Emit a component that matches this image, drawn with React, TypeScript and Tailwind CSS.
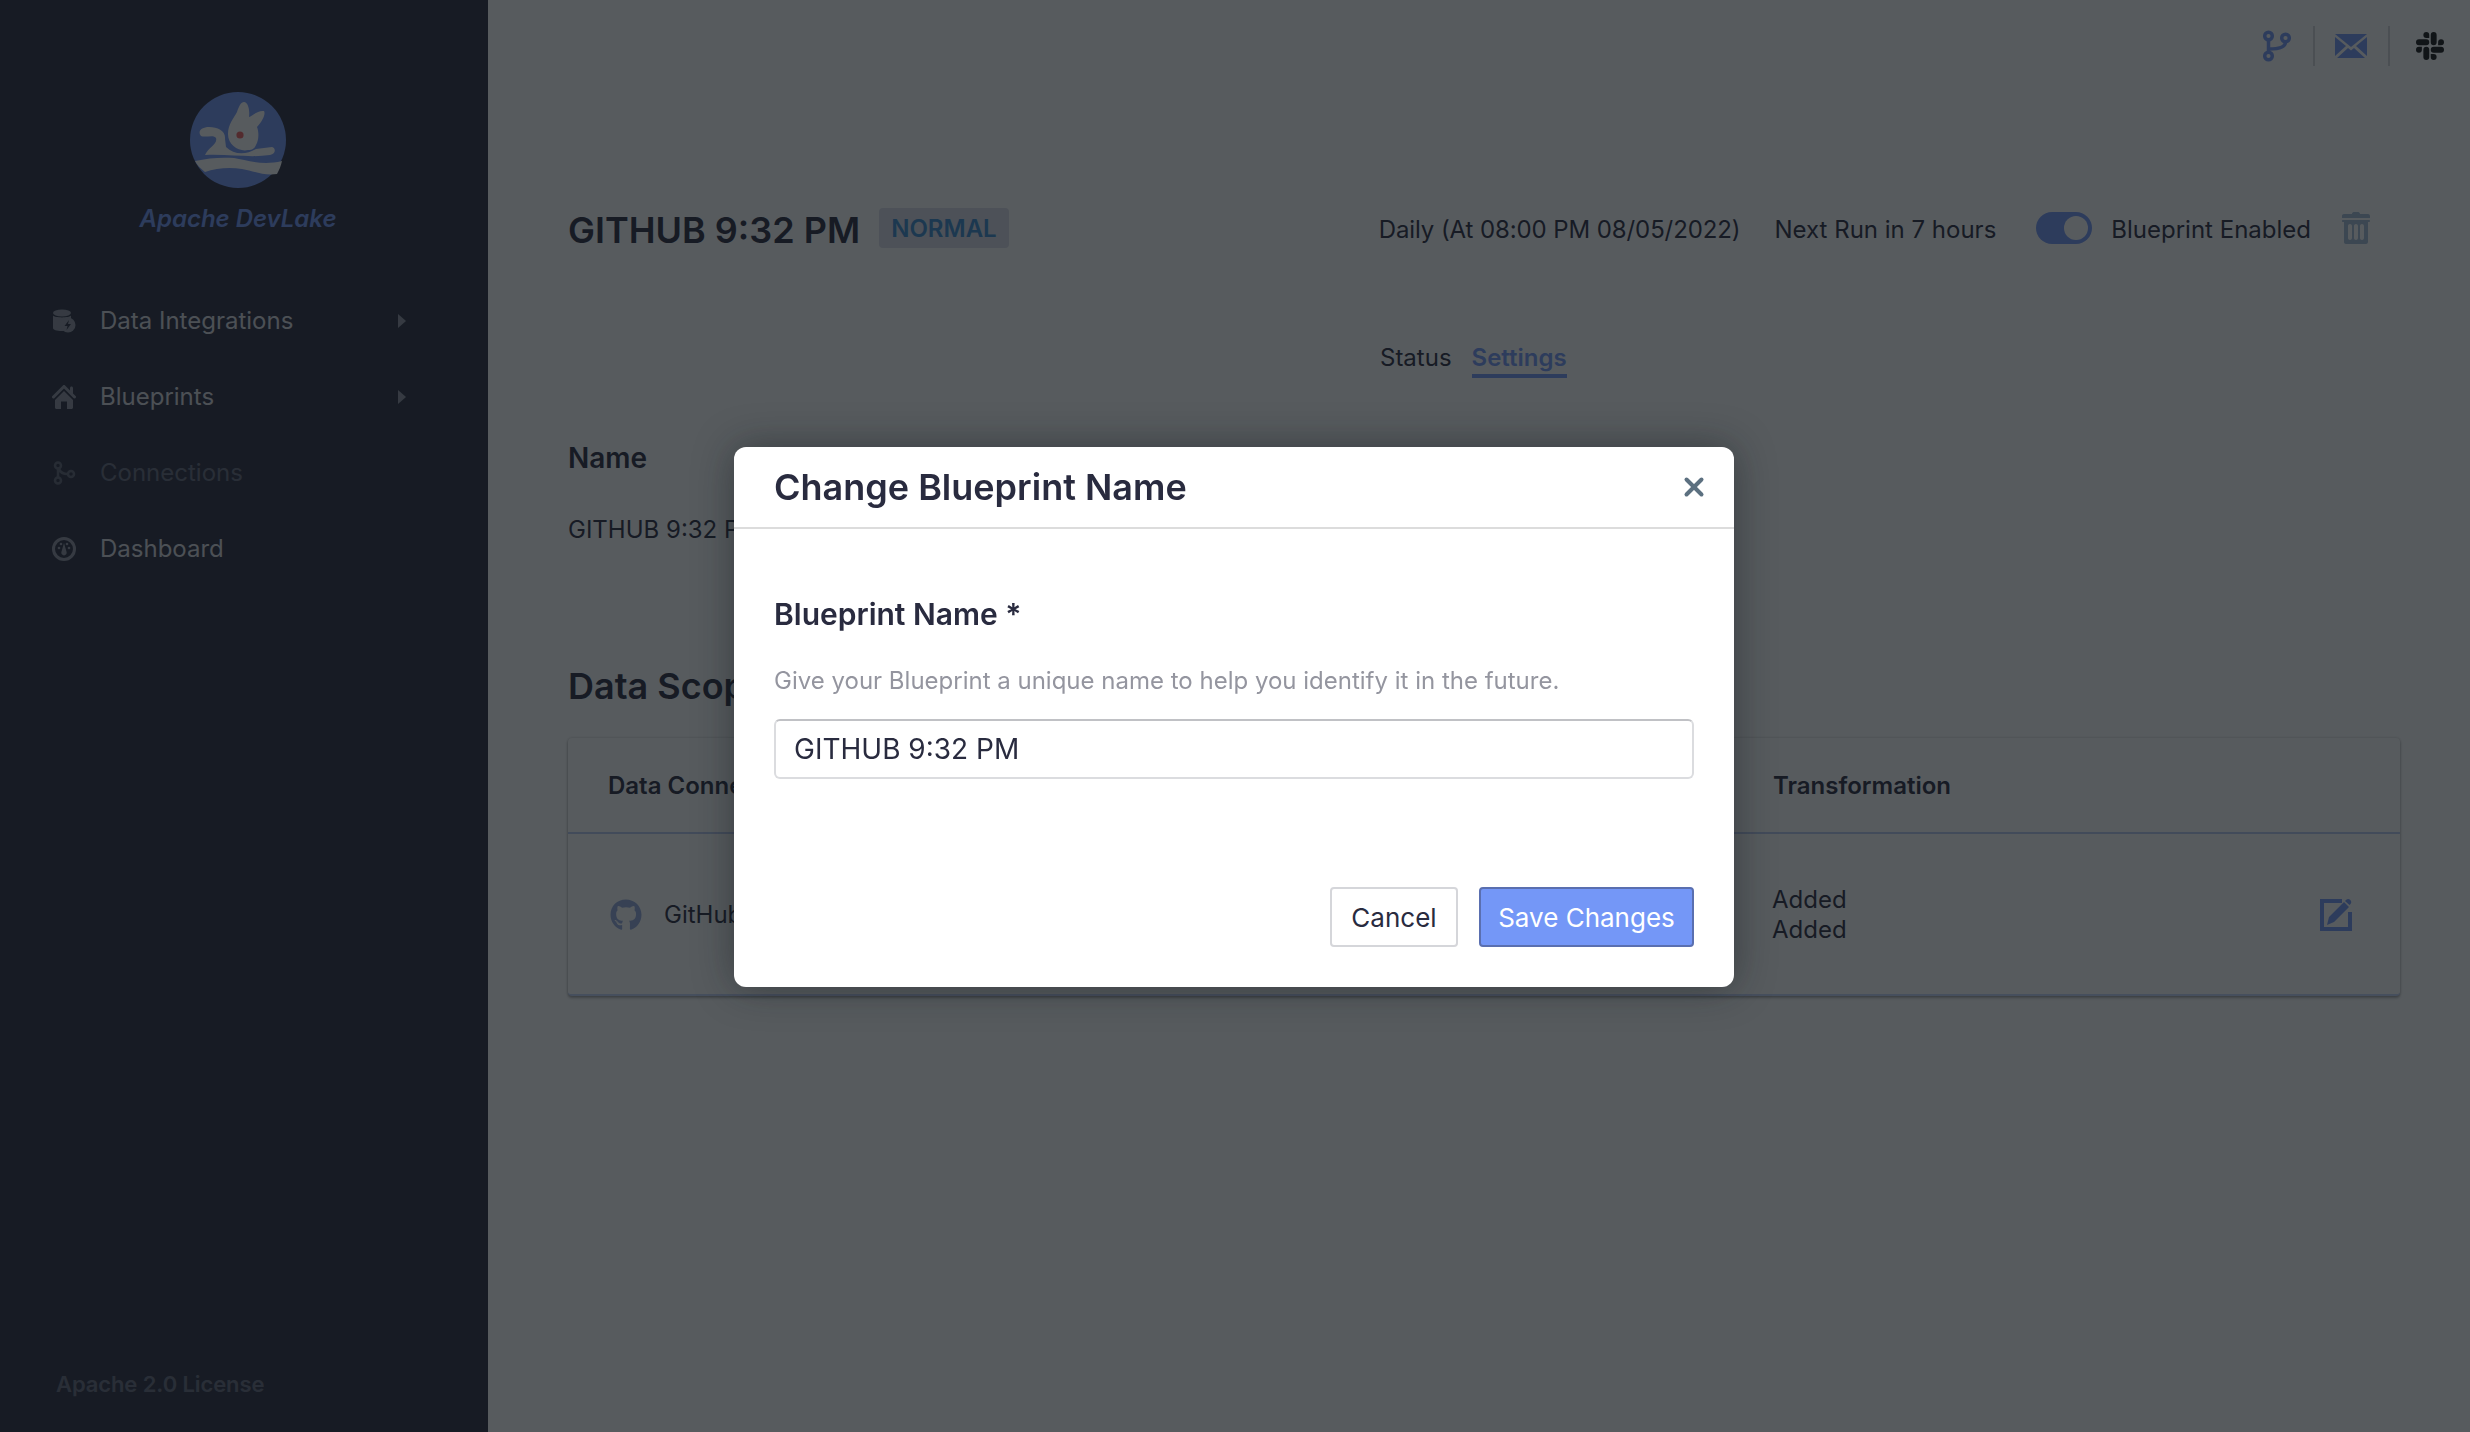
import { X } from "lucide-react";
import { FaGithub } from "react-icons/fa";
import { SiSlack } from "react-icons/si";

const navItems = [
  { label: "Data Integrations", icon: "data", caret: true, dim: false },
  { label: "Blueprints", icon: "home", caret: true, dim: false },
  { label: "Connections", icon: "conn", caret: false, dim: true },
  { label: "Dashboard", icon: "dash", caret: false, dim: false },
];

function Logo() {
  return (
    <svg width="96" height="96" viewBox="0 0 96 96">
      <circle cx="48" cy="48" r="48" fill="#7497F7" />
      <path
        d="M38 42C38 32 44 26 47 20C49 14 51 10 54 10C58 10 60 18 59 25C62 24 68 18 74 19C76 22 72 30 67 35C69 40 69 48 66 53C64 58 60 58 58 58C50 60 38 54 38 42Z"
        fill="#fff"
      />
      <path
        d="M36 55C44 63 56 63 66 57L82 55C86 56 86 62 80 63C60 66 40 62 15 63C18 56 28 52 26 46C24 42 15 46 11 44C7 39 12 35 19 35C28 35 36 39 35 47Z"
        fill="#fff"
      />
      <path d="M5 69C18 66 32 65 44 66C56 68 72 74 92 69C91 74 89 78 87 82C74 84 64 79 52 77C40 75 26 76 15 80C11 77 7 73 5 69Z" fill="#fff" />
      <circle cx="50" cy="43" r="3.6" fill="#F06060" />
    </svg>
  );
}

function NavIcon({ name }: { name: string }) {
  if (name === "data") {
    return (
      <svg width="24" height="24" viewBox="0 0 24 24" fill="currentColor">
        <ellipse cx="10" cy="4" rx="9" ry="3.4" />
        <path d="M1 6.5C3 9 17 9 19 6.5V10a8 8 0 0 0-8 8c0 1.500.3 2.800.8 4C6 22.500 1 21 1 19Z" />
        <circle cx="16" cy="16" r="7.500" />
        <path d="M17 11l-4.500 6h3l-1 4 4.500-6h-3z" fill="#292B3F" />
      </svg>
    );
  }
  if (name === "home") {
    return (
      <svg width="24" height="24" viewBox="0 0 16 16" fill="currentColor">
        <path d="M2 10v5c0 .55.45 1 1 1h3v-5h4v5h3c.55 0 1-.45 1-1v-5L8 4l-6 6zm13.71-2.71L14 5.59V2c0-.55-.45-1-1-1s-1 .45-1 1v1.59L8.71.29C8.53.11 8.28 0 8 0s-.53.11-.71.29l-7 7a1.003 1.003 0 001.42 1.42L8 2.41l6.29 6.29c.18.19.43.3.71.3a1.003 1.003 0 00.71-1.71z" />
      </svg>
    );
  }
  if (name === "conn") {
    return (
      <svg width="24" height="24" viewBox="0 0 24 24" fill="none" stroke="currentColor" strokeWidth="2.500">
        <circle cx="6" cy="4.500" r="3" />
        <circle cx="6" cy="19.500" r="3" />
        <circle cx="19" cy="13" r="3" />
        <path d="M6 7.500v9M7 8c1 3 4 5 9 5" />
      </svg>
    );
  }
  return (
    <svg width="24" height="24" viewBox="0 0 24 24" fill="currentColor">
      <path
        fillRule="evenodd"
        d="M12 0a12 12 0 1 0 0 24a12 12 0 0 0 0-24ZM12 3a9 9 0 1 1 0 18a9 9 0 0 1 0-18Z"
      />
      <circle cx="7" cy="11" r="1.300" />
      <circle cx="9" cy="7" r="1.300" />
      <circle cx="15" cy="7" r="1.300" />
      <circle cx="17" cy="11" r="1.300" />
      <path d="M12 6l2.600 9a2.700 2.700 0 1 1-5.200 0Z" />
    </svg>
  );
}

function Sidebar() {
  return (
    <aside className="w-[488px] shrink-0 bg-[#292B3F] flex flex-col pt-[92px] pb-[34px]">
      <div className="flex flex-col items-center pr-[12px]">
        <Logo />
        <div className="mt-[15px] text-[24px] leading-[32px] font-semibold italic text-[#7497F7]">
          Apache DevLake
        </div>
      </div>
      <nav className="mt-[62px] flex flex-col gap-[28px] pl-[52px]">
        {navItems.map((item) => (
          <div key={item.label} className="flex items-center h-[48px]">
            <span className={item.dim ? "text-[#5F6274]" : "text-[#8F92A0]"}>
              <NavIcon name={item.icon} />
            </span>
            <span
              className={`ml-[24px] text-[24px] leading-[32px] ${item.dim ? "text-[#676A7C]" : "text-[#D9DADF]"}`}
            >
              {item.label}
            </span>
            {item.caret && (
              <span className="ml-auto mr-[82px] w-0 h-0 border-y-[7px] border-y-transparent border-l-[8px] border-l-[#8F92A0]" />
            )}
          </div>
        ))}
      </nav>
      <div className="mt-auto pl-[56px] text-[22px] leading-[28px] tracking-[-0.1px] font-semibold text-[#676A7C]">
        Apache 2.0 License
      </div>
    </aside>
  );
}

function TrashIcon() {
  return (
    <svg width="32" height="32" viewBox="0 0 16 16" fill="#A3BBD6">
      <path d="M14.49 3.99h-13c-.28 0-.5.22-.5.5s.22.5.5.5h.5v10c0 .55.45 1 1 1h10c.55 0 1-.45 1-1v-10h.5c.28 0 .5-.22.5-.5s-.22-.5-.5-.5zm-8.5 9c0 .55-.45 1-1 1s-1-.45-1-1v-6c0-.55.45-1 1-1s1 .45 1 1v6zm3 0c0 .55-.45 1-1 1s-1-.45-1-1v-6c0-.55.45-1 1-1s1 .45 1 1v6zm3 0c0 .55-.45 1-1 1s-1-.45-1-1v-6c0-.55.45-1 1-1s1 .45 1 1v6zm2-12h-4c0-.55-.45-1-1-1h-2c-.55 0-1 .45-1 1h-4c-.55 0-1 .45-1 1v1h14v-1c0-.55-.45-1-1-1z" />
    </svg>
  );
}

function EditIcon() {
  return (
    <svg width="32" height="32" viewBox="0 0 32 32" fill="#7497F7">
      <path d="M0 0h22v4H4v24h24V13h4v19H0Z" />
      <path d="M24 3l5 5-15 15-7 3 2-8ZM26 1c1.500-1.300 3-1.300 4.300 0c1.300 1.300 1.300 3 0 4.300L29.500 6 25 2Z" />
    </svg>
  );
}

function TopBar() {
  return (
    <div className="flex justify-end items-center h-[40px] pr-[26px]">
      <svg width="28" height="32" viewBox="0 0 28 32" fill="none" stroke="#7497F7" strokeWidth="3.5" className="mr-[22px]">
        <circle cx="5.500" cy="6" r="3.800" />
        <circle cx="22.500" cy="8" r="3.800" />
        <circle cx="5.500" cy="26" r="3.800" />
        <path d="M5.500 10V22M22.500 12C22.500 18 14 19 6 19" />
      </svg>
      <span className="w-[2px] h-[40px] bg-[#D5D6DA]" />
      <svg width="32" height="24" viewBox="0 0 32 24" className="ml-[20px] mr-[21px]" fill="#7497F7">
        <path d="M0 0h32L16 13Z" />
        <path d="M0 3v19l11-10ZM32 3v19L21 12ZM2 24l11-10 3 2.500 3-2.500 11 10Z" />
      </svg>
      <span className="w-[2px] h-[40px] bg-[#D5D6DA]" />
      <SiSlack size={28} className="text-[#141414] ml-[26px]" />
    </div>
  );
}

function Header() {
  return (
    <div className="flex items-center h-[40px]">
      <h1 className="pt-[3px] text-[36px] leading-[44px] font-semibold text-[#292B3F]">GITHUB 9:32 PM</h1>
      <span className="ml-[19px] h-[40px] px-[12px] pt-[1px] flex items-center rounded-[4px] bg-[#DCDEEA] text-[24px] font-semibold text-[#3A8BD0]">
        NORMAL
      </span>
      <div className="ml-auto mr-[28px] flex items-center text-[24px] text-[#292B3F]">
        <span className="pt-[3px] tracking-[-0.1px]">Daily (At 08:00 PM 08/05/2022)</span>
        <span className="pt-[3px] ml-[34px]">Next Run in 7 hours</span>
        <span className="ml-[40px] w-[56px] h-[32px] rounded-full bg-[#7497F7] flex items-center justify-end pr-[4px]">
          <span className="w-[24px] h-[24px] rounded-full bg-white" />
        </span>
        <span className="pt-[3px] ml-[19px]">Blueprint Enabled</span>
        <span className="ml-[29px] flex">
          <TrashIcon />
        </span>
      </div>
    </div>
  );
}

function ScopeTable() {
  return (
    <div className="mt-[30px] h-[258px] rounded-[4px] bg-white shadow-[0_0_3px_rgba(0,0,0,0.2),0_2px_3px_rgba(0,0,0,0.3)] border-b-[2px] border-[#7497F7]/40 flex flex-col">
      <div className="h-[96px] shrink-0 flex items-center pt-[2px] border-b-[2px] border-[#BAC9F0] text-[24px] font-semibold text-[#292B3F]">
        <span className="ml-[40px]">Data Connections</span>
        <span className="ml-auto w-[627px]">Transformation</span>
      </div>
      <div className="flex-1 flex items-center pt-[2px] text-[24px] text-[#292B3F]">
        <FaGithub size={32} className="ml-[42px] text-[#94A9DC]" />
        <span className="ml-[22px]">GitHub</span>
        <span className="ml-auto w-[548px] leading-[30px]">
          Added
          <br />
          Added
        </span>
        <span className="mr-[48px] flex">
          <EditIcon />
        </span>
      </div>
    </div>
  );
}

function RenameDialog() {
  return (
    <div className="fixed inset-0 flex items-center justify-center bg-[rgba(16,22,26,0.7)]">
      <div className="mt-[2px] mr-[2px] w-[1000px] h-[540px] rounded-[12px] bg-white shadow-[0_0_40px_rgba(16,22,26,0.45)] flex flex-col">
        <div className="h-[82px] shrink-0 flex items-center justify-between border-b-[2px] border-[#DCDCDC] pl-[40px] pr-[25px]">
          <h2 className="text-[36px] font-semibold text-[#292B3F]">Change Blueprint Name</h2>
          <X size={30} strokeWidth={3.2} className="text-[#5C7080]" />
        </div>
        <div className="flex-1 flex flex-col px-[40px] pt-[67px] pb-[40px]">
          <h3 className="text-[30px] leading-[36px] font-semibold text-[#292B3F]">Blueprint Name *</h3>
          <p className="mt-[34px] text-[24px] leading-[30px] text-[#94959F]">
            Give your Blueprint a unique name to help you identify it in the future.
          </p>
          <input
            readOnly
            value="GITHUB 9:32 PM"
            className="mt-[23px] w-full h-[60px] px-[18px] rounded-[6px] border-[2px] border-[#DBDCDF] border-t-[#C0C1C5] text-[28px] text-[#292B3F] outline-none font-['Inter',sans-serif]"
          />
          <div className="mt-auto flex justify-end gap-[21px]">
            <button className="h-[60px] w-[128px] rounded-[4px] border-[2px] border-[#D5D6DA] bg-white text-[26px] text-[#292B3F]">
              Cancel
            </button>
            <button className="h-[60px] w-[215px] rounded-[4px] border-[2px] border-[#5A6FB0] bg-[#7497F7] text-[26px] text-white">
              Save Changes
            </button>
          </div>
        </div>
      </div>
    </div>
  );
}

export default function App() {
  return (
    <div className="h-screen flex bg-white font-['Inter',sans-serif] overflow-hidden">
      <Sidebar />
      <main className="flex-1 min-w-0 pt-[26px]">
        <TopBar />
        <div className="pl-[80px] pr-[70px] pt-[142px]">
          <Header />
          <div className="mt-[94px] pl-[812px] flex text-[24px] leading-[32px]">
            <span className="text-[#292B3F]">Status</span>
            <span className="ml-[20px] text-[#7497F7] font-semibold border-b-[4px] border-[#7497F7] h-[36px]">Settings</span>
          </div>
          <div className="mt-[62px] text-[28px] leading-[36px] font-semibold text-[#292B3F]">Name</div>
          <div className="mt-[38px] text-[24px] leading-[32px] text-[#292B3F]">GITHUB 9:32 PM</div>
          <h2 className="mt-[118px] text-[36px] leading-[44px] font-semibold text-[#292B3F]">Data Scope</h2>
          <ScopeTable />
        </div>
      </main>
      <RenameDialog />
    </div>
  );
}
